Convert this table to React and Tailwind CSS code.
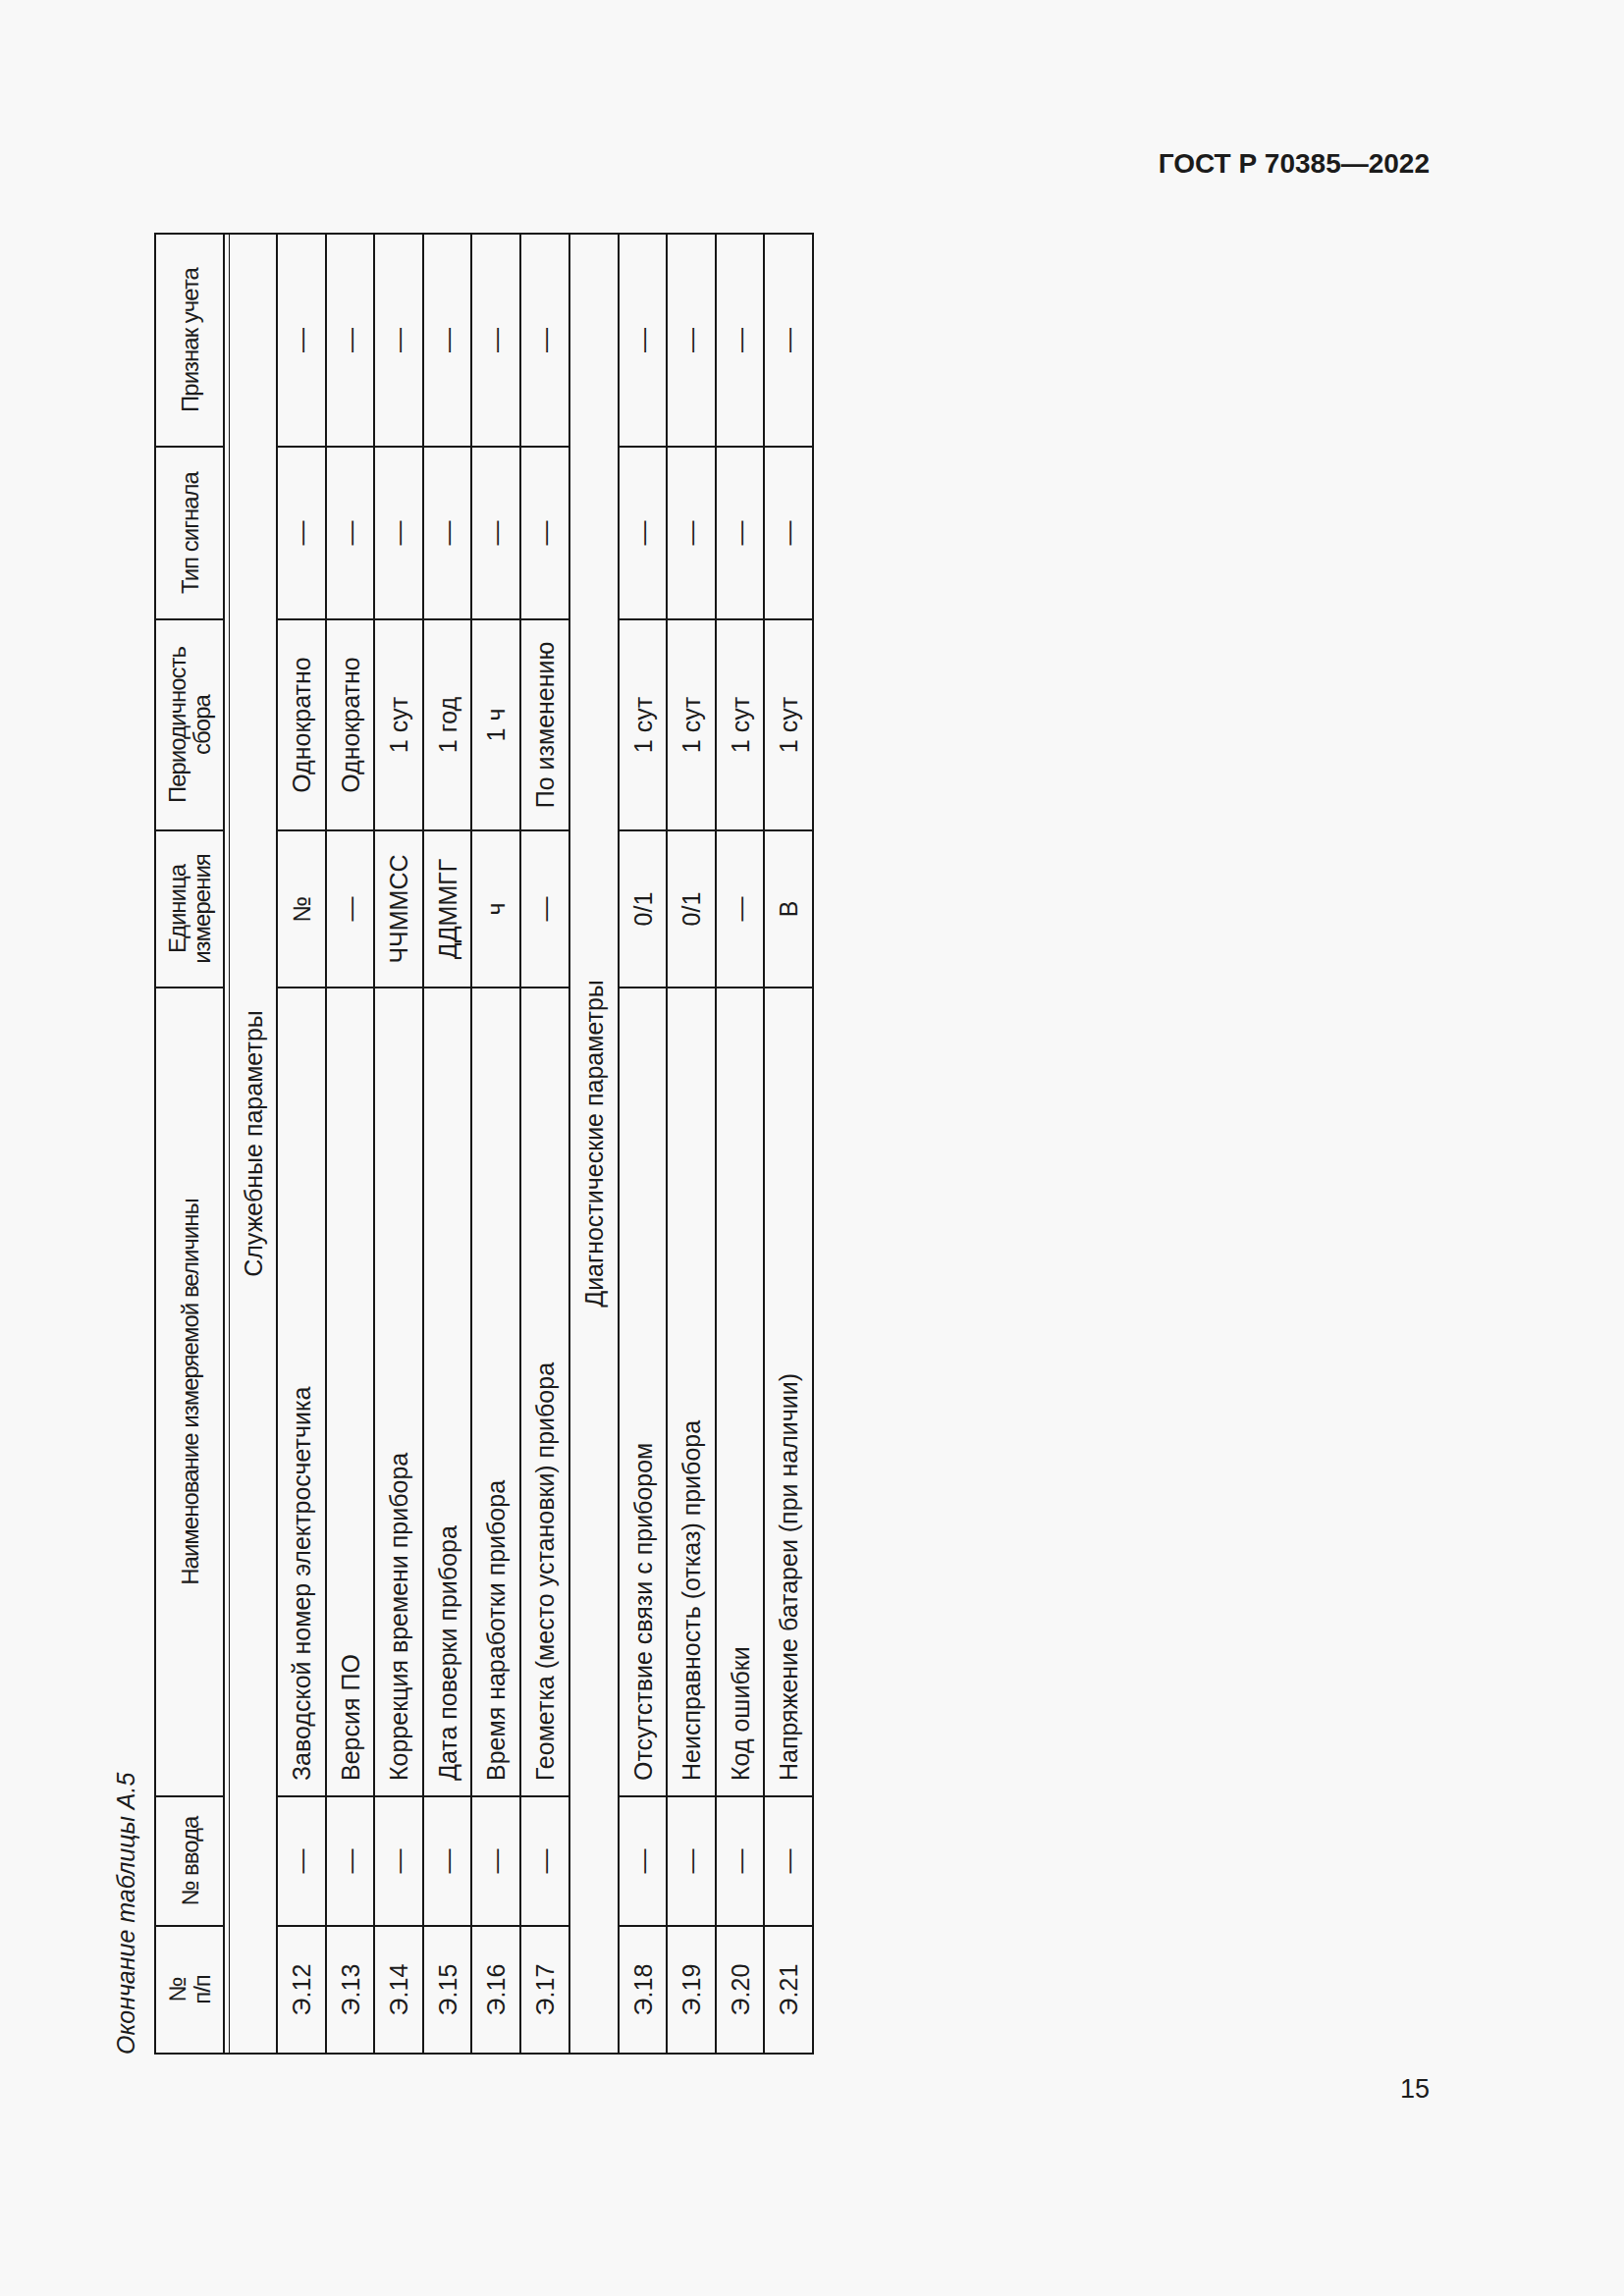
import React from "react";

const COLS = "grid grid-cols-[130px_132px_824px_160px_215px_176px_215px]";

const group1 = [
  { h: "h-[50px]", n: "Э.12", name: "Заводской номер электросчетчика", unit: "№", per: "Однократно" },
  { h: "h-[49px]", n: "Э.13", name: "Версия ПО", unit: "—", per: "Однократно" },
  { h: "h-[50px]", n: "Э.14", name: "Коррекция времени прибора", unit: "ЧЧММСС", per: "1 сут" },
  { h: "h-[49px]", n: "Э.15", name: "Дата поверки прибора", unit: "ДДММГГ", per: "1 год" },
  { h: "h-[50px]", n: "Э.16", name: "Время наработки прибора", unit: "ч", per: "1 ч" },
  { h: "h-[50px]", n: "Э.17", name: "Геометка (место установки) прибора", unit: "—", per: "По изменению" },
];

const group2 = [
  { h: "h-[49px]", n: "Э.18", name: "Отсутствие связи с прибором", unit: "0/1", per: "1 сут" },
  { h: "h-[50px]", n: "Э.19", name: "Неисправность (отказ) прибора", unit: "0/1", per: "1 сут" },
  { h: "h-[49px]", n: "Э.20", name: "Код ошибки", unit: "—", per: "1 сут" },
  { h: "h-[48px]", n: "Э.21", name: "Напряжение батареи (при наличии)", unit: "В", per: "1 сут", last: true },
];

function Cell({ children, last, left }) {
  return (
    <div
      className={
        (last ? "" : "border-r-2 border-[#161616] ") +
        (left ? "justify-start pl-[15px] " : "justify-center ") +
        "flex items-center whitespace-nowrap"
      }
    >
      {children}
    </div>
  );
}

function Row({ r }) {
  return (
    <div className={`${COLS} ${r.h} ${r.last ? "" : "border-b-2 border-[#161616]"} text-[25px] leading-[30px]`}>
      <Cell>{r.n}</Cell>
      <Cell>—</Cell>
      <Cell left>{r.name}</Cell>
      <Cell>{r.unit}</Cell>
      <Cell>{r.per}</Cell>
      <Cell>—</Cell>
      <Cell last>—</Cell>
    </div>
  );
}

function HeadCell({ children, last }) {
  return (
    <div
      className={
        (last ? "" : "border-r-2 border-[#161616] ") +
        "flex items-center justify-center text-center"
      }
    >
      <div>{children}</div>
    </div>
  );
}

export default function App() {
  return (
    <div className="w-[1654px] h-[2339px] bg-[#f8f8f8] flex flex-col font-['Liberation_Sans',Arial,sans-serif] text-[#1b1b1b]">
      <div className="pt-[151px] pr-[198px] text-right text-[28px] leading-[32px] font-bold">
        ГОСТ Р 70385—2022
      </div>

      <div className="mt-[54px] ml-[113px] w-[716px] h-[1856px]">
        <div className="w-[1856px] h-[716px] flex flex-col origin-top-left -rotate-90 translate-y-[1856px]">
          <div className="h-[30px] leading-[30px] text-[25px] italic mb-[14px]">Окончание таблицы А.5</div>

          <div className="w-[1856px] h-[672px] border-2 border-[#161616] flex flex-col">
            <div className={`${COLS} h-[70px] border-b-2 border-[#161616] text-[24px] leading-[25px] tracking-[-1px]`}>
              <HeadCell>№<br />п/п</HeadCell>
              <HeadCell>№ ввода</HeadCell>
              <HeadCell>Наименование измеряемой величины</HeadCell>
              <HeadCell>Единица<br />измерения</HeadCell>
              <HeadCell>Периодичность<br />сбора</HeadCell>
              <HeadCell>Тип сигнала</HeadCell>
              <HeadCell last>Признак учета</HeadCell>
            </div>
            <div className="h-[4px]" />
            <div className="h-[50px] border-t border-b-2 border-[#161616] flex items-center justify-center text-[25px] leading-[30px]">
              Служебные параметры
            </div>
            {group1.map((r) => (
              <Row key={r.n} r={r} />
            ))}
            <div className="h-[50px] border-b-2 border-[#161616] flex items-center justify-center text-[25px] leading-[30px]">
              Диагностические параметры
            </div>
            {group2.map((r) => (
              <Row key={r.n} r={r} />
            ))}
          </div>
        </div>
      </div>

      <div className="mt-[19px] pr-[198px] text-right text-[27px] leading-[32px]">15</div>
    </div>
  );
}
